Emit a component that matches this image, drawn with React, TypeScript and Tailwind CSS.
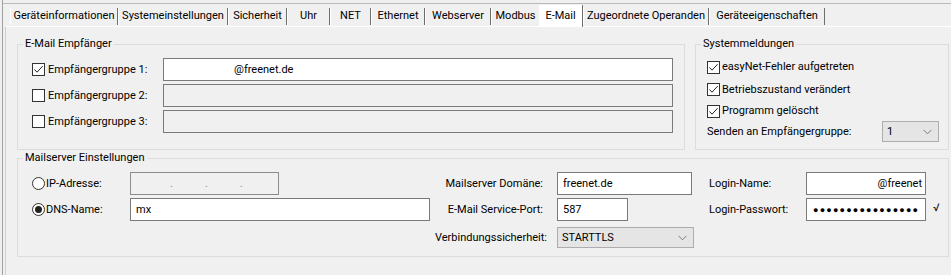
import React from "react";

const tabs = [
  { label: "Geräteinformationen", w: 108 },
  { label: "Systemeinstellungen", w: 110 },
  { label: "Sicherheit", w: 59 },
  { label: "Uhr", w: 43 },
  { label: "NET", w: 41 },
  { label: "Ethernet", w: 54 },
  { label: "Webserver", w: 66 },
  { label: "Modbus", w: 48, noSep: true },
  { label: "E-Mail", w: 44, active: true },
  { label: "Zugeordnete Operanden", w: 126 },
  { label: "Geräteeigenschaften", w: 116 },
];

const Check = ({ checked }: { checked?: boolean }) => (
  <span className="flex h-[13px] w-[13px] shrink-0 items-center justify-center border border-[#333333] bg-white">
    {checked && (
      <svg width="11" height="11" viewBox="0 0 11 11">
        <path d="M1.5 5.5 L4 8.2 L9.6 2.2" fill="none" stroke="#222222" strokeWidth="1" />
      </svg>
    )}
  </span>
);

const Radio = ({ on }: { on?: boolean }) => (
  <span className="flex h-[13px] w-[13px] shrink-0 items-center justify-center rounded-full border border-[#333333] bg-white">
    {on && <span className="h-[7px] w-[7px] rounded-full bg-[#222222]" />}
  </span>
);

const Chevron = () => (
  <svg width="9" height="6" viewBox="0 0 9 6">
    <path d="M0.5 0.8 L4.5 4.8 L8.5 0.8" fill="none" stroke="#707070" strokeWidth="0.9" />
  </svg>
);

export default function App() {
  return (
    <div
      className="h-[275px] w-[951px] overflow-hidden whitespace-nowrap bg-[#f0f0f0] pl-[2px] text-[11px] leading-[16px] text-black"
      style={{ fontFamily: "Roboto, Arial, sans-serif" }}
    >
      <div className="h-full border-l border-[#a0a0a0] pt-[3px]">
        <div className="border-t border-[#b9b9b9]" />
        {/* Tabs */}
        <div className="flex h-[22px] items-start pl-[7px]">
          {tabs.map((t) =>
            t.active ? (
              <div
                key={t.label}
                style={{ width: t.w }}
                className="mt-[1px] h-[22px] shrink-0 border-r border-[#6d6d6d] bg-white pt-[3px] text-center"
              >
                {t.label}
              </div>
            ) : (
              <div
                key={t.label}
                style={{ width: t.w }}
                className={`mt-[4px] h-[17px] shrink-0 border-l border-white text-center ${
                  t.noSep ? "" : "border-r border-r-[#6d6d6d]"
                }`}
              >
                {t.label}
              </div>
            )
          )}
        </div>

        {/* Panel */}
        <div className="ml-[2px] h-full border-l border-t border-l-[#d0d0d0] border-t-white pl-[11px] pt-[9px]">
          <div className="flex gap-[10px]">
            <fieldset className="h-[114px] w-[668px] border border-[#dcdcdc]">
              <legend className="ml-[5px] px-[2px]">E-Mail Empfänger</legend>
              <div className="flex flex-col gap-[3px] pl-[14px] pt-[6px]">
                {[1, 2, 3].map((n) => (
                  <div key={n} className="flex items-center">
                    <div className="flex w-[131px] items-center">
                      <Check checked={n === 1} />
                      <span className="ml-[3px]">Empfängergruppe {n}:</span>
                    </div>
                    <div
                      className={`flex h-[23px] w-[510px] items-center border border-[#7a7a7a] ${
                        n === 1 ? "bg-white pl-[70px]" : "bg-[#f0f0f0]"
                      }`}
                    >
                      {n === 1 ? "@freenet.de" : ""}
                    </div>
                  </div>
                ))}
              </div>
            </fieldset>

            <fieldset className="h-[114px] w-[254px] border border-[#dcdcdc]">
              <legend className="ml-[5px] px-[2px]">Systemmeldungen</legend>
              <div className="flex flex-col pl-[11px] pt-[4px]">
                <div className="flex h-[22px] items-center">
                  <Check checked />
                  <span className="ml-[2px]">easyNet-Fehler aufgetreten</span>
                </div>
                <div className="flex h-[23px] items-center">
                  <Check checked />
                  <span className="ml-[2px]">Betriebszustand verändert</span>
                </div>
                <div className="flex h-[20px] items-center">
                  <Check checked />
                  <span className="ml-[2px]">Programm gelöscht</span>
                </div>
                <div className="flex items-center">
                  <span className="w-[175px]">Senden an Empfängergruppe:</span>
                  <div className="flex h-[21px] w-[57px] items-center justify-between border border-[#adadad] bg-[#e5e5e5] pl-[4px] pr-[6px]">
                    <span>1</span>
                    <Chevron />
                  </div>
                </div>
              </div>
            </fieldset>
          </div>

          <fieldset className="h-[107px] w-[932px] border border-[#dcdcdc]">
            <legend className="ml-[5px] px-[2px]">Mailserver Einstellungen</legend>
            <div className="flex pl-[14px] pt-[6px]">
              {/* Left column */}
              <div className="flex flex-col gap-[3px]">
                <div className="flex items-center">
                  <div className="flex w-[98px] items-center">
                    <Radio />
                    <span className="ml-[1px]">IP-Adresse:</span>
                  </div>
                  <div className="flex h-[23px] w-[149px] items-center gap-[32px] border border-[#8c8c8c] pl-[39px] text-[#8a8a8a]">
                    <span>.</span>
                    <span>.</span>
                    <span>.</span>
                  </div>
                </div>
                <div className="flex items-center">
                  <div className="flex w-[98px] items-center">
                    <Radio on />
                    <span className="ml-[1px]">DNS-Name:</span>
                  </div>
                  <div className="flex h-[23px] w-[300px] items-center border border-[#7a7a7a] bg-white pl-[5px]">
                    mx
                  </div>
                </div>
              </div>

              {/* Middle column */}
              <div className="ml-[5px] flex flex-col gap-[3px]">
                <div className="flex items-center">
                  <span className="w-[108px] text-right">Mailserver Domäne:</span>
                  <div className="ml-[14px] flex h-[23px] w-[135px] items-center border border-[#7a7a7a] bg-white pl-[5px]">
                    freenet.de
                  </div>
                </div>
                <div className="flex items-center">
                  <span className="w-[108px] text-right">E-Mail Service-Port:</span>
                  <div className="ml-[14px] flex h-[23px] w-[71px] items-center border border-[#7a7a7a] bg-white pl-[5px]">
                    587
                  </div>
                </div>
                <div className="mt-[3px] flex items-center">
                  <span className="w-[108px] text-right">Verbindungssicherheit:</span>
                  <div className="ml-[14px] flex h-[21px] w-[137px] items-center justify-between border border-[#adadad] bg-[#e5e5e5] pl-[4px] pr-[6px]">
                    <span>STARTTLS</span>
                    <Chevron />
                  </div>
                </div>
              </div>

              {/* Right column */}
              <div className="ml-[15px] flex flex-col gap-[3px]">
                <div className="flex items-center">
                  <span className="w-[97px]">Login-Name:</span>
                  <div className="flex h-[23px] w-[120px] items-center justify-end border border-[#7a7a7a] bg-white pr-[3px]">
                    @freenet
                  </div>
                </div>
                <div className="flex items-center">
                  <span className="w-[97px]">Login-Passwort:</span>
                  <div className="flex h-[23px] w-[120px] items-center overflow-hidden border border-[#7a7a7a] bg-white pl-[6px] text-[9px] tracking-[1.2px]">
                    {"●".repeat(16)}
                  </div>
                  <span className="ml-[7px] -translate-y-[2px]">√</span>
                </div>
              </div>
            </div>
          </fieldset>
        </div>
      </div>
    </div>
  );
}
